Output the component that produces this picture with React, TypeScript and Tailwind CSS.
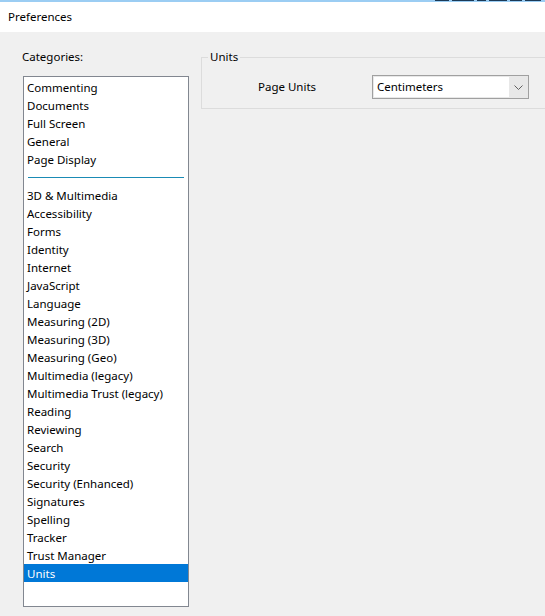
import React from "react";

const groupA = ["Commenting", "Documents", "Full Screen", "General", "Page Display"];
const groupB = [
  "3D & Multimedia",
  "Accessibility",
  "Forms",
  "Identity",
  "Internet",
  "JavaScript",
  "Language",
  "Measuring (2D)",
  "Measuring (3D)",
  "Measuring (Geo)",
  "Multimedia (legacy)",
  "Multimedia Trust (legacy)",
  "Reading",
  "Reviewing",
  "Search",
  "Security",
  "Security (Enhanced)",
  "Signatures",
  "Spelling",
  "Tracker",
  "Trust Manager",
  "Units",
];

function Item({ label }: { label: string }) {
  const selected = label === "Units";
  return (
    <div
      className={
        "h-[18px] leading-[20px] pl-[3px] whitespace-nowrap overflow-hidden " +
        (selected ? "bg-[#0078d7] text-white" : "text-black")
      }
    >
      {label}
    </div>
  );
}

export default function App() {
  return (
    <div
      className="w-[545px] h-[616px] bg-[#f0f0f0] overflow-hidden text-[11.5px] text-black"
      style={{ fontFamily: '"Noto Sans", "Liberation Sans", sans-serif' }}
    >
      <div className="h-[2px] bg-[#9bcdf3] flex justify-end gap-[3px] pr-[4px]">
        <div className="w-[14px] h-[1px] bg-[#1b3a57]" />
        <div className="w-[22px] h-[1px] bg-[#1b3a57]" />
        <div className="w-[9px] h-[1px] bg-[#1b3a57]" />
        <div className="w-[18px] h-[1px] bg-[#1b3a57]" />
        <div className="w-[12px] h-[1px] bg-[#1b3a57]" />
        <div className="w-[16px] h-[1px] bg-[#1b3a57]" />
      </div>
      <div className="h-[30px] bg-white flex items-center pl-[8px]">Preferences</div>
      <div className="flex">
        <div className="ml-[22px] w-[167px] shrink-0">
          <div className="mt-[16px] h-[18px] leading-[18px]">Categories:</div>
          <div className="mt-[10px] ml-[1px] w-[166px] h-[531px] border border-[#828790] bg-white pt-[1px]">
            {groupA.map((l) => (
              <Item key={l} label={l} />
            ))}
            <div className="h-[18px] flex items-center px-[4px]">
              <div className="h-[1px] w-full bg-[#1a8bb5]" />
            </div>
            {groupB.map((l) => (
              <Item key={l} label={l} />
            ))}
          </div>
        </div>
        <fieldset className="ml-[12px] mt-[17px] w-[360px] h-[60px] border border-[#dcdcdc] shrink-0">
          <legend className="ml-[6px] px-[2px] leading-[16px]">Units</legend>
          <div className="flex items-center mt-[10px] pl-[56px]">
            <div className="w-[114px]">Page Units</div>
            <div className="w-[157px] h-[24px] border border-[#a0a0a0] bg-[#e8e8e8] flex p-[1px]">
              <div className="flex-1 bg-white pl-[3px] leading-[20px]">Centimeters</div>
              <div className="w-[18px] flex items-center justify-center">
                <svg width="9" height="5" viewBox="0 0 9 5">
                  <path d="M0.5 0.5 L4.5 4.5 L8.5 0.5" fill="none" stroke="#606060" strokeWidth="1" />
                </svg>
              </div>
            </div>
          </div>
        </fieldset>
      </div>
    </div>
  );
}
